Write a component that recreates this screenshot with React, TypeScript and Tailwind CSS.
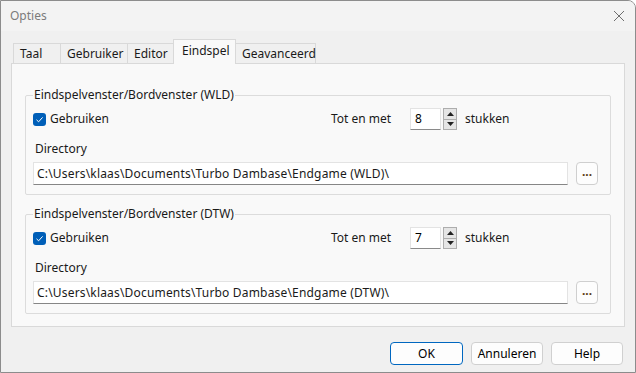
const font = { fontFamily: '"Noto Sans", "Open Sans", Arial, sans-serif' };

const tabs = [
  { label: "Taal", w: "w-[47px]" },
  { label: "Gebruiker", w: "w-[67px]" },
  { label: "Editor", w: "w-[47px]" },
  { label: "Eindspel", w: "w-[63px]", active: true },
  { label: "Geavanceerd", w: "w-[81px]" },
];

const Checkbox = () => (
  <span className="flex h-[13px] w-[13px] items-center justify-center rounded-[3px] bg-[#005fb8]">
    <svg width="9" height="9" viewBox="0 0 9 9" fill="none">
      <path d="M1.5 4.8 L3.6 6.8 L7.6 2.4" stroke="white" strokeWidth="1" />
    </svg>
  </span>
);

const Spinner = ({ value }: { value: string }) => (
  <div className="flex items-center gap-[2px]">
    <div className="flex h-[22px] w-[31px] items-center border border-[#e3e3e3] border-b-[#8a8a8a] bg-white pl-[4px] text-[12px] text-black">
      {value}
    </div>
    <div className="flex h-[22px] w-[14px] flex-col border border-[#adadad] bg-[#e5e5e5]">
      <div className="flex flex-1 items-center justify-center border-b border-[#adadad]">
        <svg width="7" height="4" viewBox="0 0 7 4">
          <path d="M0 4 L3.5 0 L7 4 Z" fill="#222" />
        </svg>
      </div>
      <div className="flex flex-1 items-center justify-center">
        <svg width="7" height="4" viewBox="0 0 7 4">
          <path d="M0 0 L3.5 4 L7 0 Z" fill="#222" />
        </svg>
      </div>
    </div>
  </div>
);

const GroupBox = ({ title, count, path }: { title: string; count: string; path: string }) => (
  <fieldset className="rounded-[2px] border border-[#dcdcdc] pl-[7px] pr-[10px] pb-[9px]">
    <legend className="px-[1px] text-[12px] leading-4 text-[#1a1a1a]">{title}</legend>
    <div className="mt-[5px] flex h-[22px] items-center">
      <div className="flex w-[298px] items-center gap-[4px]">
        <Checkbox />
        <span>Gebruiken</span>
      </div>
      <span className="w-[79px]">Tot en met</span>
      <Spinner value={count} />
      <span className="ml-[8px]">stukken</span>
    </div>
    <div className="mt-[11px] pl-[2px] leading-4">Directory</div>
    <div className="mt-[5px] flex items-center gap-[8px]">
      <div className="flex h-[23px] w-[535px] items-center border border-[#e3e3e3] border-b-[#868686] bg-white pl-[3px] tracking-[0.18px]">
        {path}
      </div>
      <div className="flex h-[23px] w-[22px] items-center justify-center rounded-[4px] border border-[#cfcfcf] bg-[#fdfdfd] pb-[4px] font-bold text-[#5a3a10]">
        ...
      </div>
    </div>
  </fieldset>
);

const Button = ({ label, primary }: { label: string; primary?: boolean }) => (
  <div
    className={
      "flex h-[23px] items-center justify-center rounded-[4px] bg-[#fdfdfd] text-[12px] text-black " +
      (primary ? "w-[73px] border border-[#0067c0]" : "w-[72px] border border-[#d0d0d0]")
    }
  >
    {label}
  </div>
);

export default function App() {
  return (
    <div
      style={font}
      className="flex h-[373px] w-[636px] flex-col overflow-hidden rounded-tr-[8px] border border-[#8c8c8c] bg-[#f0f0f0] text-[12px] text-[#1a1a1a]"
    >
      <div className="flex h-[30px] shrink-0 items-center justify-between bg-[#f3f3f3] pl-[9px] pr-[9px]">
        <span className="text-[12px] text-[#7b7b7b]">Opties</span>
        <svg width="12" height="12" viewBox="0 0 12 12" className="mr-[1px]">
          <path d="M1 1 L11 11 M11 1 L1 11" stroke="#6e6e6e" strokeWidth="1" />
        </svg>
      </div>

      <div className="flex flex-1 flex-col px-[10px] pt-[8px]">
        <div className="flex items-end pl-[2px]">
          {tabs.map((t) =>
            t.active ? (
              <div
                key={t.label}
                className={`relative z-10 -mx-[1px] -mb-px flex h-[25px] ${t.w} items-start border border-b-0 border-[#d9d9d9] bg-[#f9f9f9] pl-[8px] pt-[2px]`}
              >
                {t.label}
              </div>
            ) : (
              <div
                key={t.label}
                className={`flex h-[20px] ${t.w} items-center border border-b-0 border-r-0 border-[#d9d9d9] pl-[6px] last:border-r`}
              >
                {t.label}
              </div>
            )
          )}
        </div>
        <div className="h-[264px] border border-[#d9d9d9] bg-[#f9f9f9] px-[13px] pt-[23px]">
          <GroupBox title="Eindspelvenster/Bordvenster (WLD)" count="8" path="C:\Users\klaas\Documents\Turbo Dambase\Endgame (WLD)\" />
          <div className="h-[11px]" />
          <GroupBox title="Eindspelvenster/Bordvenster (DTW)" count="7" path="C:\Users\klaas\Documents\Turbo Dambase\Endgame (DTW)\" />
        </div>
        <div className="mt-[15px] flex justify-end gap-[8px] pr-[2px]">
          <Button label="OK" primary />
          <Button label="Annuleren" />
          <Button label="Help" />
        </div>
      </div>
    </div>
  );
}
